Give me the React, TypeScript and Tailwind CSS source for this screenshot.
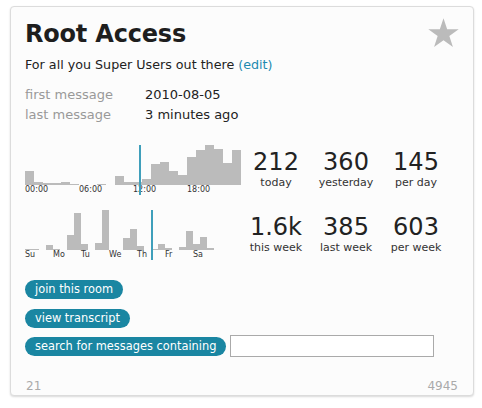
const dayBars = [14, 3, 2, 2, 3, 1, 0, 0, 1, 0, 9, 3, 3, 6, 21, 23, 14, 10, 28, 35, 40, 36, 22, 35];
const weekBars = [1, 1, 0, 5, 1, 0, 15, 37, 6, 0, 7, 40, 0, 0, 12, 21, 4, 0, 1, 6, 2, 0, 3, 19, 6, 13, 2, 0];

function Chart({ bars, barW, labels, step, now }: { bars: number[]; barW: number; labels: string[]; step: number; now: number }) {
    return (
        <div className="relative w-[216px] shrink-0">
            <div className="flex items-end h-[40px]">
                {bars.map((h, i) => (
                    <div key={i} className="bg-[#bbbbbb] shrink-0" style={{ width: barW, height: h }} />
                ))}
            </div>
            <div className="flex text-[8px] leading-[10px] text-[#333]">
                {labels.map((l) => (
                    <div key={l} className="shrink-0" style={{ width: step }}>{l}</div>
                ))}
            </div>
            <div className="absolute top-0 w-[2px] h-[50px] bg-[#3f9fbb]" style={{ left: now }} />
        </div>
    );
}

function Stat({ value, label }: { value: string; label: string }) {
    return (
        <div className="w-[70px] text-center">
            <div className="text-[24px] leading-[28px] text-[#222]">{value}</div>
            <div className="text-[11px] leading-[14px] text-[#333]">{label}</div>
        </div>
    );
}

export default function App() {
    return (
        <div className="min-h-[408px] bg-white pt-[6px] pl-[10px]" style={{ fontFamily: '"DejaVu Sans", Verdana, sans-serif' }}>
            <div className="relative w-[464px] h-[390px] bg-[#fcfcfc] border border-[#dcdcdc] rounded-[4px] shadow-[0_1px_2px_rgba(0,0,0,0.15)] pt-[13px] pl-[14px] pr-[15px] flex flex-col">
                <svg className="absolute right-[14px] top-[11px]" width="31" height="30" viewBox="0 0 100 95">
                    <polygon fill="#bbbbbb" points="50,0 61.8,35.3 99,35.3 68.9,57.1 80.4,92.7 50,70.7 19.6,92.7 31.1,57.1 1,35.3 38.2,35.3" />
                </svg>

                <h1 className="text-[24px] leading-[28px] font-bold text-[#1e1e1e] tracking-[-0.2px]">Root Access</h1>
                <p className="mt-[7px] text-[12.7px] leading-[20px] text-[#222]">
                    For all you Super Users out there <a className="text-[#1d8ab0]">(edit)</a>
                </p>

                <div className="mt-[10px] text-[13px] leading-[20px]">
                    <div className="flex">
                        <span className="w-[120px] text-[#999]">first message</span>
                        <span className="text-[#222]">2010-08-05</span>
                    </div>
                    <div className="flex">
                        <span className="w-[120px] text-[#999]">last message</span>
                        <span className="text-[#222]">3 minutes ago</span>
                    </div>
                </div>

                <div className="mt-[20px] flex h-[65px]">
                    <Chart bars={dayBars} barW={9} labels={['00:00', '06:00', '12:00', '18:00']} step={54} now={114} />
                    <div className="flex mt-[3px]">
                        <Stat value="212" label="today" />
                        <Stat value="360" label="yesterday" />
                        <Stat value="145" label="per day" />
                    </div>
                </div>
                <div className="flex h-[65px]">
                    <Chart bars={weekBars} barW={7} labels={['Su', 'Mo', 'Tu', 'We', 'Th', 'Fr', 'Sa']} step={28} now={126} />
                    <div className="flex mt-[3px]">
                        <Stat value="1.6k" label="this week" />
                        <Stat value="385" label="last week" />
                        <Stat value="603" label="per week" />
                    </div>
                </div>

                <div className="mt-[5px] flex flex-col items-start text-[11.4px] text-white">
                    <button className="h-[19px] px-[10px] rounded-full bg-[#1a86a2] leading-[19px]">join this room</button>
                    <button className="mt-[10px] h-[19px] px-[10px] rounded-full bg-[#1a86a2] leading-[19px]">view transcript</button>
                    <div className="mt-[7px] flex items-center gap-[4px]">
                        <button className="h-[19px] px-[10px] rounded-full bg-[#1a86a2] leading-[19px]">search for messages containing</button>
                        <input className="w-[204px] h-[22px] border border-[#aaaaaa] bg-white outline-none" />
                    </div>
                </div>

                <div className="mt-auto mb-[1px] flex justify-between text-[12px] leading-[16px] text-[#aaa]">
                    <span className="pl-[1px]">21</span>
                    <span>4945</span>
                </div>
            </div>
        </div>
    );
}
